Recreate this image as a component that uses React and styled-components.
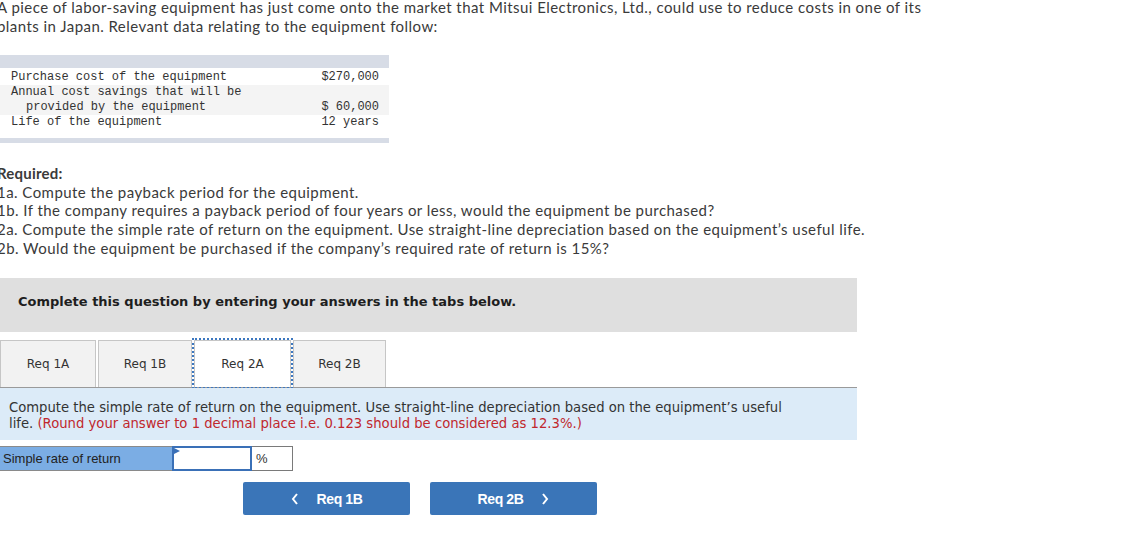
import React from 'react';
import styled, { createGlobalStyle } from 'styled-components';

const GlobalStyle = createGlobalStyle`
  html, body {
    margin: 0;
    padding: 0;
    background: #ffffff;
  }
  body {
    font-family: Lato, "Open Sans", sans-serif;
    color: #333333;
    overflow: hidden;
  }
`;

const Page = styled.div`
  width: 857px;
  display: flex;
  flex-direction: column;
`;

const Para = styled.p`
  margin: ${({ top }) => top || 0}px 0 0 -3px;
  font-size: 15px;
  letter-spacing: 0.45px;
  line-height: 18.6px;
  white-space: nowrap;
  color: #3a3a3a;
`;

const DataTable = styled.div`
  width: 389px;
  margin-top: 20px;
  font-family: "Liberation Mono", "DejaVu Sans Mono", monospace;
  font-size: 12px;
  line-height: 15px;
  color: #333333;
  border-top: 13px solid #d7dce6;
  border-bottom: 5px solid #d7dce6;
`;

const DataRow = styled.div`
  display: grid;
  grid-template-columns: 1fr auto;
  padding: ${({ pad }) => pad};
  background: ${({ shaded }) => (shaded ? '#f4f4f4' : '#ffffff')};
`;

const Label = styled.div`
  padding-left: ${({ indent }) => (indent ? 26 : 11)}px;
  white-space: pre;
`;

const Value = styled.div`
  padding-right: 10px;
  text-align: right;
  white-space: pre;
`;

const Heading = styled.span`
  font-weight: 700;
  letter-spacing: 0.2px;
`;

const Instruction = styled.div`
  margin-top: 21px;
  background: #dfdfdf;
  padding: 16px 18px 22px;
  font-family: "DejaVu Sans", Verdana, sans-serif;
  font-weight: 700;
  font-size: 13px;
  line-height: 16px;
  color: #1e1e1e;
`;

const TabBar = styled.div`
  margin-top: 8px;
  display: flex;
  gap: 2px;
  align-items: flex-end;
  border-bottom: 1px solid #9a9a9a;
`;

const Tab = styled.div`
  box-sizing: border-box;
  height: 47px;
  display: flex;
  align-items: center;
  justify-content: center;
  font-family: "DejaVu Sans", Verdana, sans-serif;
  font-size: 12px;
  color: #333333;
  background: ${({ active }) => (active ? '#ffffff' : '#f2f2f2')};
  border: 1px solid #c6c6c6;
  border-bottom: none;
  outline: ${({ active }) => (active ? '2px dotted #3d78c0' : 'none')};
  outline-offset: 0;
`;

const InfoBox = styled.div`
  background: #dcebf8;
  padding: 12px 9px 8px;
  font-family: "DejaVu Sans", Verdana, sans-serif;
  font-size: 13.2px;
  line-height: 16px;
  color: #333333;
  white-space: nowrap;
`;

const Hint = styled.span`
  color: #c0272d;
`;

const AnswerRow = styled.div`
  margin-top: 6px;
  display: flex;
  height: 25px;
`;

const AnswerLabel = styled.div`
  box-sizing: border-box;
  width: 172px;
  background: #7badE4;
  border: 1px solid #8a8a8a;
  border-left: none;
  border-right: none;
  padding-left: 3px;
  display: flex;
  align-items: center;
  font-family: "Liberation Sans", Arial, sans-serif;
  font-size: 13px;
  color: #222222;
`;

const InputWrap = styled.div`
  position: relative;
  box-sizing: border-box;
  width: 80px;
  border: 2px solid #3a70b7;
  background: #ffffff;
`;

const Flag = styled.span`
  position: absolute;
  top: 0;
  left: 0;
  width: 0;
  height: 0;
  border-top: 3px solid transparent;
  border-bottom: 3px solid transparent;
  border-left: 6px solid #3a70b7;
`;

const Unit = styled.div`
  box-sizing: border-box;
  width: 41px;
  border: 1px solid #7a7a7a;
  border-left: none;
  padding-left: 4px;
  display: flex;
  align-items: center;
  font-family: "Liberation Sans", Arial, sans-serif;
  font-size: 13px;
  color: #333333;
`;

const NavRow = styled.div`
  margin-top: 11px;
  padding-left: 243px;
  display: flex;
  gap: 20px;
`;

const NavButton = styled.button`
  box-sizing: border-box;
  width: 167px;
  height: 33px;
  border: none;
  border-radius: 2px;
  background: #3a75b8;
  color: #ffffff;
  font-family: "Liberation Sans", Arial, sans-serif;
  font-weight: 700;
  font-size: 14px;
  letter-spacing: -0.4px;
  display: flex;
  align-items: center;
  justify-content: center;
  gap: 18px;
  cursor: pointer;
`;

const Chevron = ({ dir }) => (
  <svg width="8" height="12" viewBox="0 0 8 12">
    <path
      d={dir === 'left' ? 'M6 1 L2 6 L6 11' : 'M2 1 L6 6 L2 11'}
      fill="none"
      stroke="#ffffff"
      strokeWidth="2"
    />
  </svg>
);

const tabs = [
  { label: 'Req 1A', width: 96 },
  { label: 'Req 1B', width: 94 },
  { label: 'Req 2A', width: 97, active: true },
  { label: 'Req 2B', width: 93 },
];

export default function App() {
  return (
    <Page>
      <GlobalStyle />
      <Para top={-2}>
        A piece of labor-saving equipment has just come onto the market that Mitsui Electronics, Ltd., could use to reduce costs in one of its
        <br />
        plants in Japan. Relevant data relating to the equipment follow:
      </Para>

      <DataTable>
        <DataRow pad="2px 0 0">
          <Label>Purchase cost of the equipment</Label>
          <Value>$270,000</Value>
        </DataRow>
        <DataRow shaded pad="0">
          <div>
            <Label>Annual cost savings that will be</Label>
            <Label indent>provided by the equipment</Label>
          </div>
          <Value>{'\n$ 60,000'}</Value>
        </DataRow>
        <DataRow pad="0 0 8px">
          <Label>Life of the equipment</Label>
          <Value>12 years</Value>
        </DataRow>
      </DataTable>

      <Para top={21}>
        <Heading>Required:</Heading>
        <br />
        1a. Compute the payback period for the equipment.
        <br />
        1b. If the company requires a payback period of four years or less, would the equipment be purchased?
        <br />
        2a. Compute the simple rate of return on the equipment. Use straight-line depreciation based on the equipment’s useful life.
        <br />
        2b. Would the equipment be purchased if the company’s required rate of return is 15%?
      </Para>

      <Instruction>Complete this question by entering your answers in the tabs below.</Instruction>

      <TabBar>
        {tabs.map((t) => (
          <Tab key={t.label} active={t.active} style={{ width: t.width }}>
            {t.label}
          </Tab>
        ))}
      </TabBar>

      <InfoBox>
        Compute the simple rate of return on the equipment. Use straight-line depreciation based on the equipment’s useful
        <br />
        life. <Hint>(Round your answer to 1 decimal place i.e. 0.123 should be considered as 12.3%.)</Hint>
      </InfoBox>

      <AnswerRow>
        <AnswerLabel>Simple rate of return</AnswerLabel>
        <InputWrap>
          <Flag />
        </InputWrap>
        <Unit>%</Unit>
      </AnswerRow>

      <NavRow>
        <NavButton>
          <Chevron dir="left" />
          Req 1B
        </NavButton>
        <NavButton>
          Req 2B
          <Chevron dir="right" />
        </NavButton>
      </NavRow>
    </Page>
  );
}
